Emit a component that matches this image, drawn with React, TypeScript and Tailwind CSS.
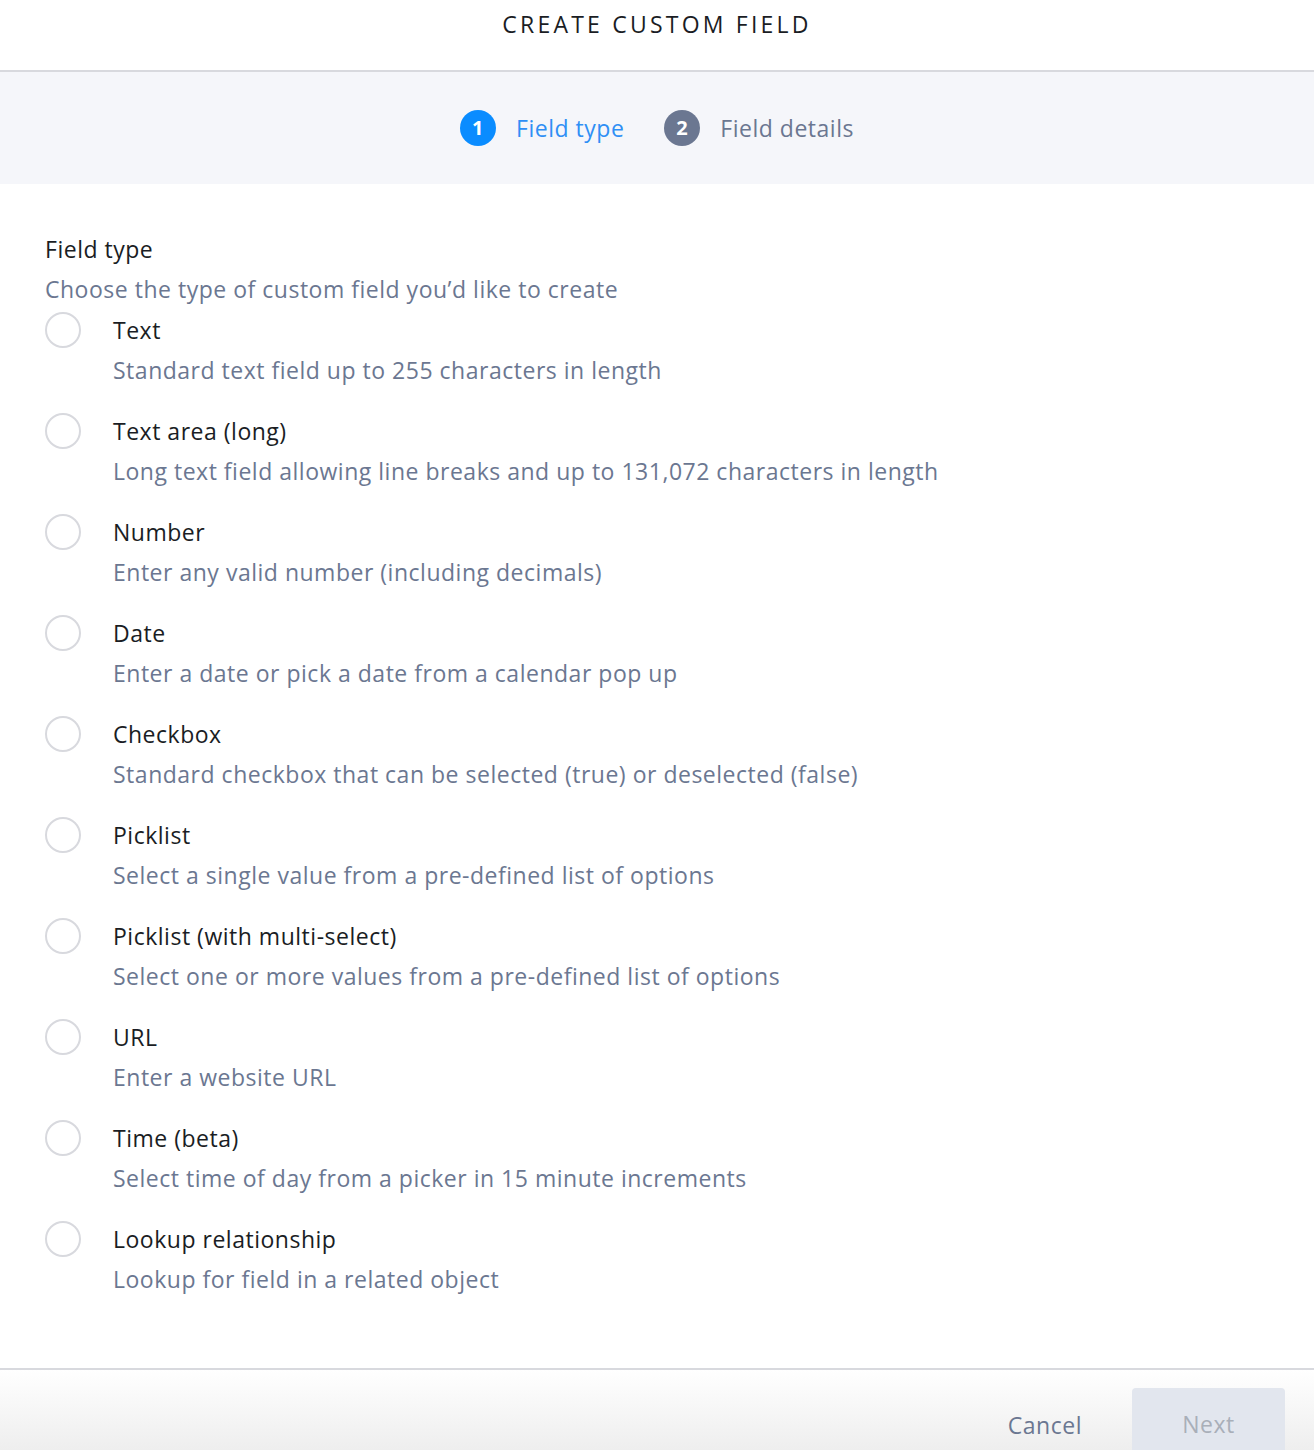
const options = [
  { title: 'Text', desc: 'Standard text field up to 255 characters in length' },
  { title: 'Text area (long)', desc: 'Long text field allowing line breaks and up to 131,072 characters in length' },
  { title: 'Number', desc: 'Enter any valid number (including decimals)' },
  { title: 'Date', desc: 'Enter a date or pick a date from a calendar pop up' },
  { title: 'Checkbox', desc: 'Standard checkbox that can be selected (true) or deselected (false)' },
  { title: 'Picklist', desc: 'Select a single value from a pre-defined list of options' },
  { title: 'Picklist (with multi-select)', desc: 'Select one or more values from a pre-defined list of options' },
  { title: 'URL', desc: 'Enter a website URL' },
  { title: 'Time (beta)', desc: 'Select time of day from a picker in 15 minute increments' },
  { title: 'Lookup relationship', desc: 'Lookup for field in a related object' },
];

const App = () => {
  return (
    <div className="w-[1314px] h-[1450px] overflow-hidden bg-white flex flex-col font-['Open_Sans',sans-serif] tracking-[0.032em]">
      <div className="h-[72px] shrink-0 flex justify-center pt-[9px] border-b-2 border-[#d8d9de]">
        <h1 className="text-[23px] tracking-[0.14em] text-[#1a1d24] leading-[30px]">CREATE CUSTOM FIELD</h1>
      </div>
      <div className="h-[112px] shrink-0 bg-[#f5f6fa] flex justify-center items-center gap-10">
        <div className="flex items-center gap-5">
          <div className="w-9 h-9 rounded-full bg-[#0a8cff] text-white flex items-center justify-center text-[20px] font-bold">1</div>
          <span className="text-[23px] text-[#2f8ff5]">Field type</span>
        </div>
        <div className="flex items-center gap-5">
          <div className="w-9 h-9 rounded-full bg-[#6b7791] text-white flex items-center justify-center text-[20px] font-bold">2</div>
          <span className="text-[23px] text-[#6b7791]">Field details</span>
        </div>
      </div>
      <div className="flex-1 px-[45px] pt-[50px]">
        <div className="text-[23px] text-[#1a1d24] leading-[30px]">Field type</div>
        <div className="text-[23px] text-[#6b7791] leading-[30px] mt-[10px]">Choose the type of custom field you’d like to create</div>
        <div className="flex flex-col mt-[8px]">
          {options.map((o) => (
            <div key={o.title} className="flex h-[101px]">
              <div className="w-9 h-9 rounded-full border-2 border-[#d8d9de] shrink-0"></div>
              <div className="ml-8 pt-[3px]">
                <div className="text-[23px] text-[#1a1d24] leading-[30px]">{o.title}</div>
                <div className="text-[23px] text-[#6b7791] leading-[30px] mt-[10px]">{o.desc}</div>
              </div>
            </div>
          ))}
        </div>
      </div>
      <div className="h-[82px] shrink-0 border-t-2 border-[#d8d9de] bg-gradient-to-b from-white to-[#eeeeee] flex justify-end items-end pr-[29px] gap-[50px]">
        <button className="text-[23px] text-[#6b7791] mb-[8px]">Cancel</button>
        <button className="w-[153px] h-[62px] rounded-t-[4px] bg-[#e2e6ee] text-[23px] text-[#a9afb9] pt-[10px]">Next</button>
      </div>
    </div>
  );
};

export default App;
